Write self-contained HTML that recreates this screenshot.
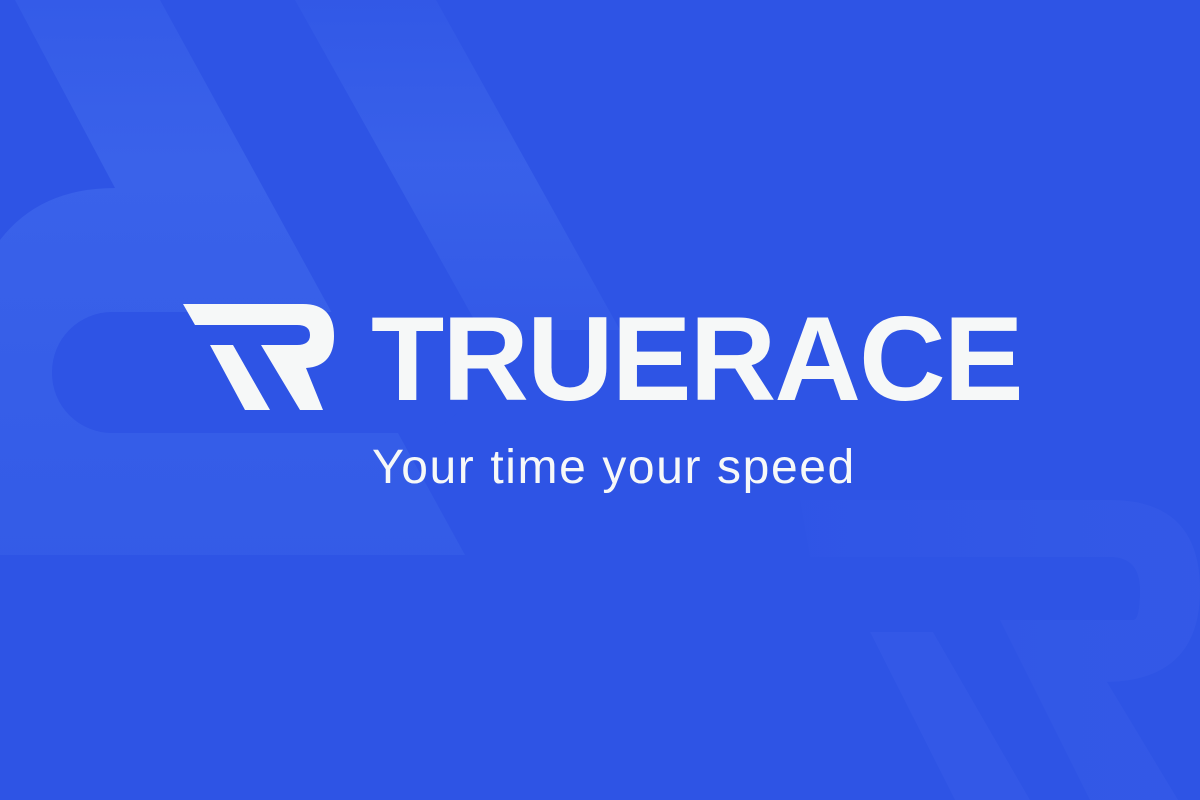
<!DOCTYPE html>
<html><head><meta charset="utf-8"><style>
html,body{margin:0;padding:0}
body{width:1200px;height:800px;background:#2e54e5;overflow:hidden;position:relative;font-family:"Liberation Sans",sans-serif}
svg{position:absolute;left:0;top:0}
.t{position:absolute;color:#f6f8f8;white-space:nowrap}
</style></head><body>
<svg width="1200" height="800" viewBox="0 0 1200 800">
<defs>
<linearGradient id="g1" x1="0" y1="0" x2="0" y2="1"><stop offset="0" stop-color="#3a62ea" stop-opacity="0.5"/><stop offset="0.3" stop-color="#3a62ea" stop-opacity="1"/><stop offset="1" stop-color="#3760e8" stop-opacity="0.6"/></linearGradient>
<linearGradient id="g2" x1="0" y1="0" x2="0" y2="1"><stop offset="0" stop-color="#3a62ea" stop-opacity="0.3"/><stop offset="0.5" stop-color="#3a62ea" stop-opacity="0.9"/><stop offset="1" stop-color="#3a62ea" stop-opacity="0.4"/></linearGradient>
<linearGradient id="g3" x1="0" y1="0" x2="1" y2="0"><stop offset="0" stop-color="#3459e7" stop-opacity="0.2"/><stop offset="0.6" stop-color="#3459e7" stop-opacity="0.7"/><stop offset="1" stop-color="#3459e7" stop-opacity="0.9"/></linearGradient>
</defs>
<path fill="url(#g1)" d="M15,0 L160,0 L465,555 L0,555 L0,240 Q40,188 115,188 Z"/>
<rect x="52" y="312" width="420" height="121" rx="60" fill="#2e54e5"/>
<path fill="url(#g2)" d="M295,0 L436,0 L620,330 L480,330 Z"/>
<path fill="url(#g3)" d="M800,500 L1110,500 Q1200,500 1200,590 Q1200,680 1107,682 L1178,800 L1090,800 L1000,620 L1133,620 Q1140,620 1140,590 Q1140,557 1110,557 L810,557 Z"/>
<path fill="#3459e7" opacity="0.8" d="M870,632 L933,632 L1030,800 L955,800 Z"/>
<path fill="#f6f8f8" d="M183,304 L303,304 Q334,304 334,336 Q334,366 306,368 L323,410 L300,410 L261,345 L297,345 Q310,345 310,335 Q310,325 297,325 L195,325 Z"/>
<path fill="#f6f8f8" d="M210,345 L233,345 L270,410 L245,410 Z"/>
</svg>
<div class="t" style="left:371px;top:295px;font-size:120px;font-weight:bold;letter-spacing:-2px;line-height:128px">TRUERACE</div>
<div class="t" style="left:372px;top:440px;font-size:48px;letter-spacing:1.6px;line-height:56px">Your time your speed</div>
</body></html>
